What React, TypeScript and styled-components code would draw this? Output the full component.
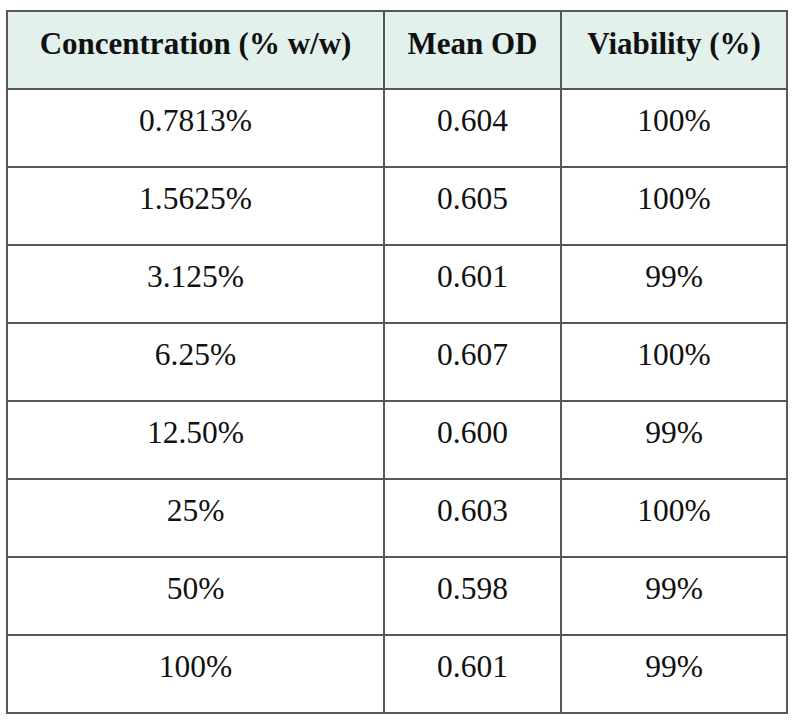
import React from 'react'
import styled, { createGlobalStyle } from 'styled-components'

const GlobalStyle = createGlobalStyle`
  html, body {
    margin: 0;
    padding: 0;
    background: #ffffff;
  }
`

const Page = styled.div`
  padding: 10px 0 0 6px;
  font-family: "Liberation Serif", "Times New Roman", serif;
  color: #111111;
`

const Table = styled.table`
  width: 780px;
  border-collapse: collapse;
  table-layout: fixed;
  border: 2px solid #575757;
`

const Col = styled.col<{ $w: number }>`
  width: ${p => p.$w}px;
`

const Row = styled.tr`
  height: 78px;
`

const HeadCell = styled.th`
  background: #e3f1ed;
  border: 2px solid #575757;
  font-size: 31px;
  font-weight: 700;
  text-align: center;
  vertical-align: middle;
  padding: 0 0 13px;
  white-space: nowrap;
`

const Cell = styled.td`
  border: 2px solid #575757;
  font-size: 31.5px;
  text-align: center;
  vertical-align: middle;
  padding: 0 0 14px;
`

const rows = [
  ['0.7813%', '0.604', '100%'],
  ['1.5625%', '0.605', '100%'],
  ['3.125%', '0.601', '99%'],
  ['6.25%', '0.607', '100%'],
  ['12.50%', '0.600', '99%'],
  ['25%', '0.603', '100%'],
  ['50%', '0.598', '99%'],
  ['100%', '0.601', '99%'],
]

export default function App() {
  return (
    <>
      <GlobalStyle />
      <Page>
        <Table>
          <colgroup>
            <Col $w={377} />
            <Col $w={177} />
            <Col $w={226} />
          </colgroup>
          <thead>
            <Row>
              <HeadCell>Concentration (% w/w)</HeadCell>
              <HeadCell>Mean OD</HeadCell>
              <HeadCell>Viability (%)</HeadCell>
            </Row>
          </thead>
          <tbody>
            {rows.map(r => (
              <Row key={r[0]}>
                {r.map((v, i) => (
                  <Cell key={i}>{v}</Cell>
                ))}
              </Row>
            ))}
          </tbody>
        </Table>
      </Page>
    </>
  )
}
